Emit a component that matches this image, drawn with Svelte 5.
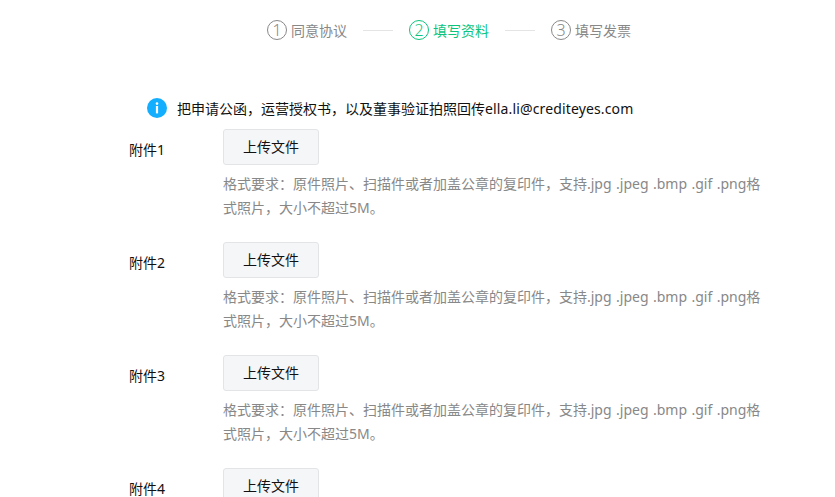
<script lang="ts">
  const steps = [
    { n: 1, label: '同意协议', active: false },
    { n: 2, label: '填写资料', active: true },
    { n: 3, label: '填写发票', active: false }
  ];
  const attachments = [1, 2, 3, 4];
  const hint = '格式要求：原件照片、扫描件或者加盖公章的复印件，支持.jpg .jpeg .bmp .gif .png格式照片，大小不超过5M。';
</script>

<div class="page">
  <div class="steps">
    {#each steps as step, i}
      {#if i > 0}<span class="line"></span>{/if}
      <div class="step" class:active={step.active}>
        <span class="num">{step.n}</span>
        <span>{step.label}</span>
      </div>
    {/each}
  </div>

  <div class="notice">
    <svg width="20" height="20" viewBox="0 0 20 20">
      <circle cx="10" cy="10" r="10" fill="#14aeff" />
      <circle cx="10" cy="5.6" r="1.3" fill="#fff" />
      <rect x="8.9" y="8" width="2.2" height="7.4" fill="#fff" />
    </svg>
    <span>把申请公函，运营授权书，以及董事验证拍照回传<span class="mail">ella.li@crediteyes.com</span></span>
  </div>

  {#each attachments as a}
    <div class="row">
      <div class="label">附件{a}</div>
      <div class="body">
        <button type="button" class="upload">上传文件</button>
        <p class="hint">{hint}</p>
      </div>
    </div>
  {/each}
</div>

<style>
  :global(body) {
    margin: 0;
    background: #fff;
    overflow: hidden;
  }

  .page {
    height: 497px;
    overflow: hidden;
    font-family: "Noto Sans", "Noto Sans CJK SC", sans-serif;
    font-size: 14px;
    color: #222;
    text-spacing-trim: space-all;
  }

  /* Steps */
  .steps {
    display: flex;
    align-items: center;
    padding: 19px 0 0 267px;
    height: 22px;
    color: #888;
  }

  .step {
    display: flex;
    align-items: center;
    gap: 4px;
  }

  .step.active {
    color: #0cc47e;
  }

  .num {
    box-sizing: border-box;
    width: 20px;
    height: 20px;
    border: 1px solid currentColor;
    border-radius: 50%;
    display: flex;
    align-items: center;
    justify-content: center;
    font-size: 16px;
    font-weight: 300;
    line-height: 1;
  }

  .line {
    width: 30px;
    height: 1px;
    background: #e4e4e4;
    margin: 0 16px;
  }

  /* Notice */
  .notice {
    display: flex;
    align-items: center;
    gap: 10px;
    margin: 57px 0 0 147px;
    height: 20px;
    color: #111;
  }

  .mail {
    letter-spacing: 0.14px;
  }

  /* Attachment rows */
  .row {
    display: flex;
    margin-top: 11px;
    height: 102px;
  }

  .label {
    width: 94px;
    margin-left: 129px;
    padding-top: 10px;
    color: #111;
  }

  .body {
    width: 540px;
  }

  .upload {
    display: block;
    width: 96px;
    height: 36px;
    padding: 0 0 2px;
    background: #f5f6f8;
    border: 1px solid #e3e4e6;
    border-radius: 3px;
    color: #111;
    font: inherit;
  }

  .hint {
    margin: 7px 0 0;
    line-height: 24px;
    color: #888;
    word-spacing: 0.8px;
  }
</style>
